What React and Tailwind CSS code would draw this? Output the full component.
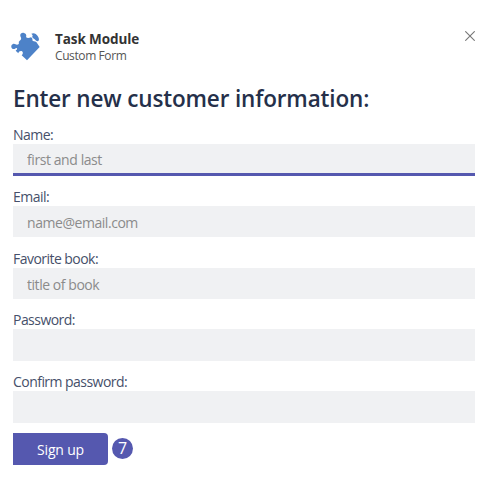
const fields = [
  { id: "name", label: "Name:", placeholder: "first and last", active: true },
  { id: "email", label: "Email:", placeholder: "name@email.com" },
  { id: "book", label: "Favorite book:", placeholder: "title of book" },
  { id: "password", label: "Password:", type: "password" },
  { id: "confirm", label: "Confirm password:", type: "password" },
];

function PuzzleIcon() {
  return (
    <svg className="mt-0.5 h-[30px] w-[30px] shrink-0" viewBox="18 21 90 90" fill="#4d82c8">
      <path d="M44 47C48 44 50 41 47 36 43 28 49 22 57 24 64 26 65 32 63 36 66 40 72 39 78 37 82 39 83 43 82 46 84 50 89 48 94 51L104 66 66 106 50 91C54 87 55 82 51 79 46 77 41 80 40 85L32 77C37 74 38 70 34 69 30 71 27 74 22 71 17 67 18 59 24 57 29 55 32 59 36 59 41 59 43 55 41 51Z" />
      <path d="M79 26C86 22 94 26 98 33 102 39 104 46 99 49 94 50 92 44 88 42 83 40 80 36 83 31Z" />
    </svg>
  );
}

export default function App() {
  return (
    <div className="h-[490px] w-[493px] bg-white pt-[30px] pr-[18px] pl-[13px] font-['Open_Sans','Noto_Sans',sans-serif]">
      <header className="flex h-[51px] items-start">
        <div className="-ml-0.5 w-11 shrink-0">
          <PuzzleIcon />
        </div>
        <div className="flex-1">
          <div className="h-[18px] text-[13.5px] leading-[18px] font-bold tracking-[-0.1px] whitespace-nowrap text-[#333]">
            <span>Task Module</span>
          </div>
          <div className="text-[12px] leading-4 tracking-[-0.4px] text-[#555]">
            <span>Custom Form</span>
          </div>
        </div>
        <button type="button" aria-label="Close" className="-mr-px p-px">
          <svg className="h-[10px] w-[10px]" viewBox="0 0 10 10" fill="none" stroke="#777" strokeWidth="1.1">
            <path d="M.3.3 9.7 9.7M9.7.3.3 9.7" />
          </svg>
        </button>
      </header>
      <h1 className="h-[45px] text-[22.5px] leading-[36px] font-semibold tracking-[-0.15px] whitespace-nowrap text-[#25304a]">
        <span>Enter new customer information:</span>
      </h1>
      <form>
        {fields.map((field) => (
          <div key={field.id} className="h-[61.75px]">
            <label htmlFor={field.id} className="block h-[18px] text-[14px] leading-[18px] tracking-[-0.54px] whitespace-nowrap text-[#46506a]">
              <span>{field.label}</span>
            </label>
            <input
              id={field.id}
              type={field.type || "text"}
              placeholder={field.placeholder}
              className={
                field.active
                  ? "block h-8 w-full border-b-[3px] border-[#5558af] bg-[#f0f1f3] px-3.5 pt-0.5 text-[14px] tracking-[-0.42px] outline-none placeholder:text-[#8b8b8b]"
                  : "block h-[31.5px] w-full bg-[#f0f1f3] px-3.5 pt-0.5 text-[14px] tracking-[-0.45px] outline-none placeholder:text-[#8b8b8b]"
              }
            />
          </div>
        ))}
        <div className="-mt-[1.5px] flex items-center gap-1">
          <button type="button" className="h-8 w-[95px] rounded-r-sm bg-[#5558af] pt-px text-[14px] tracking-[-0.2px] text-white">
            <span>Sign up</span>
          </button>
          <span className="mb-0.5 flex h-[21px] w-[21px] items-center justify-center rounded-full bg-[#5558af] text-[16px] leading-none text-white">7</span>
        </div>
      </form>
    </div>
  );
}
